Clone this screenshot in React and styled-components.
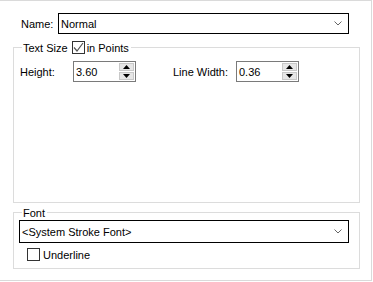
import styled, { createGlobalStyle } from "styled-components";

const Global = createGlobalStyle`
  body {
    margin: 0;
    background: #fff;
    font-family: "Liberation Sans", Arial, sans-serif;
    font-size: 11px;
    color: #000;
  }
`;

const Frame = styled.div`
  width: 372px;
  height: 281px;
  box-sizing: border-box;
  border: 1px solid #dadada;
  border-left: none;
  padding-top: 12px;
  background: #fff;
`;

const NameRow = styled.div`
  display: flex;
  align-items: center;
  padding-left: 21px;
  height: 21px;
`;

const Label = styled.span`
  width: ${(p) => p.$w || "auto"};
  flex: none;
  white-space: nowrap;
`;

const Combo = styled.div`
  display: flex;
  align-items: center;
  justify-content: space-between;
  box-sizing: border-box;
  width: ${(p) => p.$w};
  height: ${(p) => p.$h};
  border: 1px solid #000;
  padding: 0 6px 0 2px;
  white-space: nowrap;
`;

const Group = styled.div`
  box-sizing: border-box;
  margin: ${(p) => p.$mt} 0 0 13px;
  width: 347px;
  height: ${(p) => p.$h};
  border: 1px solid #dcdcdc;
  padding: 0 5px 0 ${(p) => p.$pl || "5px"};
`;

const Legend = styled.div`
  display: flex;
  align-items: center;
  width: fit-content;
  height: 15px;
  margin: -8px 0 0 ${(p) => p.$ml || "2px"};
  padding: 0 2px 0 1px;
  background: #fff;
`;

const Row = styled.div`
  display: flex;
  align-items: center;
  margin-top: 6px;
`;

const Spin = styled.div`
  display: flex;
  box-sizing: border-box;
  width: 63px;
  height: 21px;
  border: 1px solid #7a7a7a;
  margin-right: ${(p) => p.$mr || "0"};
`;

const SpinValue = styled.div`
  flex: 1;
  display: flex;
  align-items: center;
  padding-left: 2px;
`;

const SpinButtons = styled.div`
  display: flex;
  flex-direction: column;
  gap: 1px;
  width: 15px;
  padding: 1px 1px 1px 0;
`;

const SpinButton = styled.div`
  flex: 1;
  display: flex;
  align-items: center;
  justify-content: center;
  box-sizing: border-box;
  background: #e6e6e6;
  border: 1px solid #c8c8c8;
`;

const Box = styled.div`
  box-sizing: border-box;
  width: 13px;
  height: 13px;
  border: 1px solid #333;
  background: #fff;
  display: flex;
  align-items: center;
  justify-content: center;
  flex: none;
  margin: ${(p) => p.$m || "0"};
`;

const CheckRow = styled.div`
  display: flex;
  align-items: center;
  gap: 3px;
  margin: ${(p) => p.$m || "0"};
`;

const Chevron = () => (
  <svg width="8" height="5" viewBox="0 0 8 5">
    <path d="M0.5 0.5 L4 4 L7.5 0.5" fill="none" stroke="#666" strokeWidth="1" />
  </svg>
);

const Arrow = ({ up }) => (
  <svg width="7" height="4" viewBox="0 0 7 4">
    <path d={up ? "M0 4 L3.5 0 L7 4 Z" : "M0 0 L3.5 4 L7 0 Z"} fill="#000" />
  </svg>
);

const Check = () => (
  <svg width="11" height="11" viewBox="0 0 11 11">
    <path d="M1 5.5 L4 9 L10 1" fill="none" stroke="#555" strokeWidth="1.2" />
  </svg>
);

const SpinBox = ({ value, mr }) => (
  <Spin $mr={mr}>
    <SpinValue>{value}</SpinValue>
    <SpinButtons>
      <SpinButton>
        <Arrow up />
      </SpinButton>
      <SpinButton>
        <Arrow />
      </SpinButton>
    </SpinButtons>
  </Spin>
);

export default function App() {
  return (
    <>
      <Global />
      <Frame>
        <NameRow>
          <Label $w="37px">Name:</Label>
          <Combo $w="291px" $h="21px">
            <span>Normal</span>
            <Chevron />
          </Combo>
        </NameRow>

        <Group $mt="13px" $h="156px" $pl="6px">
          <Legend>
            <span>Text Size</span>
            <Box $m="0 2px 0 4px">
              <Check />
            </Box>
            <span>in Points</span>
          </Legend>
          <Row>
            <Label $w="53px">Height:</Label>
            <SpinBox value="3.60" mr="37px" />
            <Label $w="63px">Line Width:</Label>
            <SpinBox value="0.36" />
          </Row>
        </Group>

        <Group $mt="9px" $h="57px">
          <Legend $ml="3px">
            <span>Font</span>
          </Legend>
          <Combo $w="330px" $h="23px">
            <span>&lt;System Stroke Font&gt;</span>
            <Chevron />
          </Combo>
          <CheckRow $m="5px 0 0 8px">
            <Box />
            <span>Underline</span>
          </CheckRow>
        </Group>
      </Frame>
    </>
  );
}
